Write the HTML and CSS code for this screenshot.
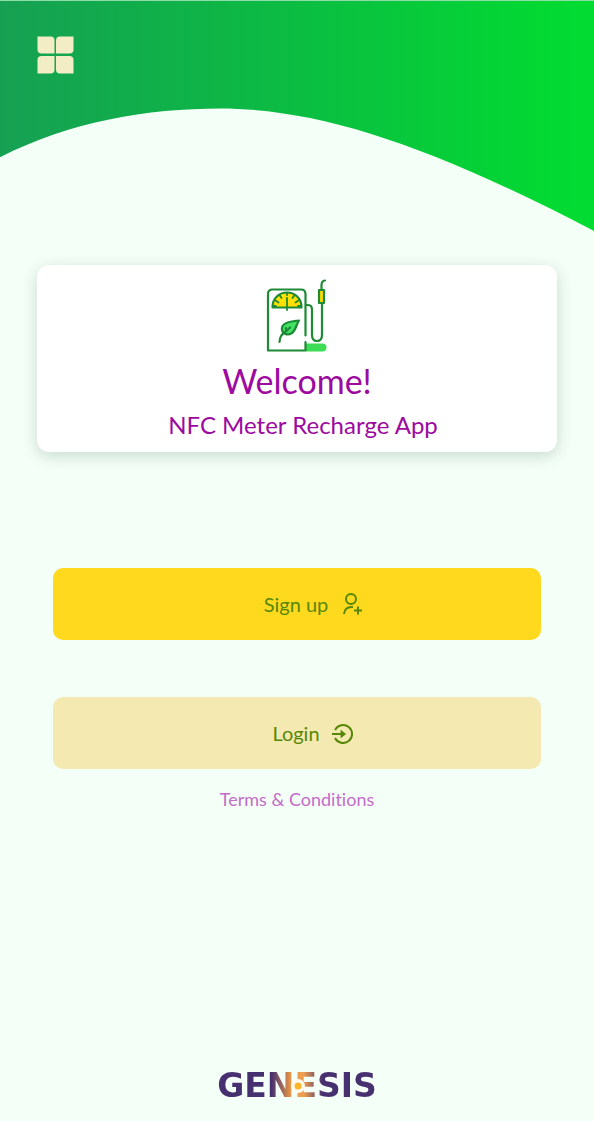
FILE: index.html
```html
<!DOCTYPE html>
<html lang="en">
<head>
<meta charset="utf-8">
<meta name="viewport" content="width=device-width, initial-scale=1">
<title>NFC Meter Recharge App</title>
<link rel="stylesheet" href="styles.css">
</head>
<body>
<div class="page">
  <header class="hero">
    <svg class="hero-wave" viewBox="0 0 594 231" preserveAspectRatio="none" aria-hidden="true">
      <defs>
        <linearGradient id="wave" x1="0" x2="1" y1="0" y2="0">
          <stop offset="0" stop-color="#16a053"/>
          <stop offset=".5" stop-color="#0bbd42"/>
          <stop offset=".93" stop-color="#02d932"/>
          <stop offset="1" stop-color="#01dc32"/>
        </linearGradient>
      </defs>
      <path fill="url(#wave)" d="M0 0H594V231C430 145 320 108 220 108C148 108 70 121 0 157Z"/>
    </svg>
    <button class="menu" type="button" aria-label="Menu">
      <svg width="37" height="38" viewBox="0 0 37 38" fill="#f2edc4" aria-hidden="true">
        <path d="M.5 .5H13.500Q17.500 .5 17.500 4.500V17.500H4.500Q.5 17.500 .5 13.500Z"/>
        <path d="M36.500 .5H23Q19 .5 19 4.500V17.500H32.500Q36.500 17.500 36.500 13.500Z"/>
        <path d="M.5 37.500H13.500Q17.500 37.500 17.500 33.500V20H4.500Q.5 20 .5 24Z"/>
        <path d="M36.500 37.500H23Q19 37.500 19 33.500V20H32.500Q36.500 20 36.500 24Z"/>
      </svg>
    </button>
  </header>

  <main class="content">
    <section class="card">
      <svg class="pump" width="62" height="76" viewBox="0 0 62 76" fill="none" stroke="#1d8a35" stroke-width="2.200" stroke-linecap="round" stroke-linejoin="round" aria-hidden="true">
        <path d="M40 65.500H56.500A4 4 0 0 1 56.500 73.500H40Z" fill="#3ddc55" stroke="none"/>
        <path d="M39.500 57.500V16Q39.500 11.500 35 11.500H6.500Q2 11.500 2 16V72.500H39.500V64"/>
        <path d="M6.500 29.500C6.500 9.500 35.500 9.500 35.500 29.500Z" fill="#ffe000"/>
        <path d="M21 20V32M21 15V17M13.500 17L15.500 20M28.500 17L26.500 20M9.500 22.500L12.500 24.500M32.500 22.500L29.500 24.500M7.500 28H10M32 28H34.500" stroke-width="1.800"/>
        <path d="M33 42.500C21 43.500 15 46 16 52C17 56.500 22 57.500 26 55C30 52 30 47 33 42.500Z" fill="#43e262"/>
        <path d="M24 49.500L20 53.500C15.500 56 13.500 59 13.500 64M20 53V50"/>
        <path d="M40.500 27C45 27 46 28 46 32V57Q46 63 51 63Q56 63 56 57V25"/>
        <path d="M53 12H58V25H53Z" fill="#ffdb00"/>
        <path d="M55.500 11V7Q55.500 3 59 2.500"/>
      </svg>
      <h1 class="card-title">Welcome!</h1>
      <p class="card-text">NFC Meter Recharge App</p>
    </section>

    <div class="actions">
      <button class="btn btn-primary" type="button">
        <span>Sign up</span>
        <svg width="22" height="22" viewBox="0 0 22 22" fill="none" stroke="currentColor" stroke-width="2" aria-hidden="true">
          <circle cx="11" cy="6" r="5"/>
          <path d="M4 21C4.500 16 7.500 13.500 13 14M14 17.500H22M18 13.500V21.500"/>
        </svg>
      </button>
      <button class="btn btn-secondary" type="button">
        <span>Login</span>
        <svg width="22" height="22" viewBox="0 0 22 22" fill="none" stroke="currentColor" stroke-width="2" aria-hidden="true">
          <path d="M3 8A9 9 0 1 1 3 16M0 12H11"/>
          <path d="M9 8.500L13.500 12L9 15.500Z" fill="currentColor" stroke-width="1"/>
        </svg>
      </button>
    </div>
    <a class="terms" href="#terms">Terms &amp; Conditions</a>
  </main>

  <footer class="footer">
    <div class="logo">GENESIS
      <svg class="logo-sun" width="18" height="26" viewBox="0 0 18 26" aria-hidden="true">
        <circle cx="9" cy="13" r="7" fill="#fffaf0"/>
        <circle cx="9" cy="13" r="3.500" fill="#fdb827"/>
      </svg>
    </div>
  </footer>
</div>
</body>
</html>
```
FILE: styles.css
```css
* {
  box-sizing: border-box;
}

body {
  margin: 0;
  background: #f4fff8;
  font-family: Lato, "Open Sans", sans-serif;
  font-variant-ligatures: none;
}

.page {
  display: flex;
  flex-direction: column;
  min-height: 100vh;
}

.hero {
  position: relative;
  min-height: 231px;
  padding: 35px 37px;
  border-top: 1px solid #8fdcaa;
}

.hero-wave {
  position: absolute;
  inset: 0;
  width: 100%;
  height: 100%;
}

.menu {
  position: relative;
  display: block;
  padding: 0;
  border: 0;
  background: none;
  cursor: pointer;
}

.menu svg {
  display: block;
}

.content {
  display: flex;
  flex-direction: column;
  padding: 34px 37px 0;
}

.card {
  display: flex;
  flex-direction: column;
  align-items: center;
  padding: 13px 16px 11px;
  border-radius: 12px;
  background: #fff;
  box-shadow: 0 4px 16px rgba(0, 50, 20, 0.18);
  color: #9c0aa0;
}

.pump {
  display: block;
}

.card-title {
  margin: 5px 0 0;
  font-size: 34px;
  line-height: 44px;
  font-weight: 400;
}

.card-text {
  margin: 6px 0 0;
  padding-left: 12px;
  font-size: 24px;
  line-height: 32px;
}

.actions {
  display: grid;
  gap: 57px;
  margin-top: 116px;
  padding: 0 16px;
}

.btn {
  display: flex;
  align-items: center;
  justify-content: center;
  gap: 12px;
  min-height: 72px;
  padding: 0 0 0 32px;
  border: 0;
  border-radius: 10px;
  color: #568808;
  font-family: inherit;
  font-size: 20px;
  line-height: 28px;
  cursor: pointer;
}

.btn-primary {
  background: #ffd91e;
}

.btn-secondary {
  background: #f5e9b2;
}

.terms {
  align-self: center;
  margin-top: 18px;
  color: #c46cc8;
  font-size: 18px;
  line-height: 24px;
  text-decoration: none;
}

.footer {
  display: flex;
  justify-content: center;
  margin-top: auto;
  padding: 24px 0 17px;
}

.logo {
  position: relative;
  background: linear-gradient(90deg, #46306f 34%, #e79548 46%, #f0a050 54%, #46306f 66%);
  -webkit-background-clip: text;
  background-clip: text;
  color: transparent;
  font-family: "DejaVu Sans", sans-serif;
  font-size: 33px;
  line-height: 36px;
  font-weight: 700;
}

.logo-sun {
  position: absolute;
  top: 5px;
  left: 45%;
}
```
